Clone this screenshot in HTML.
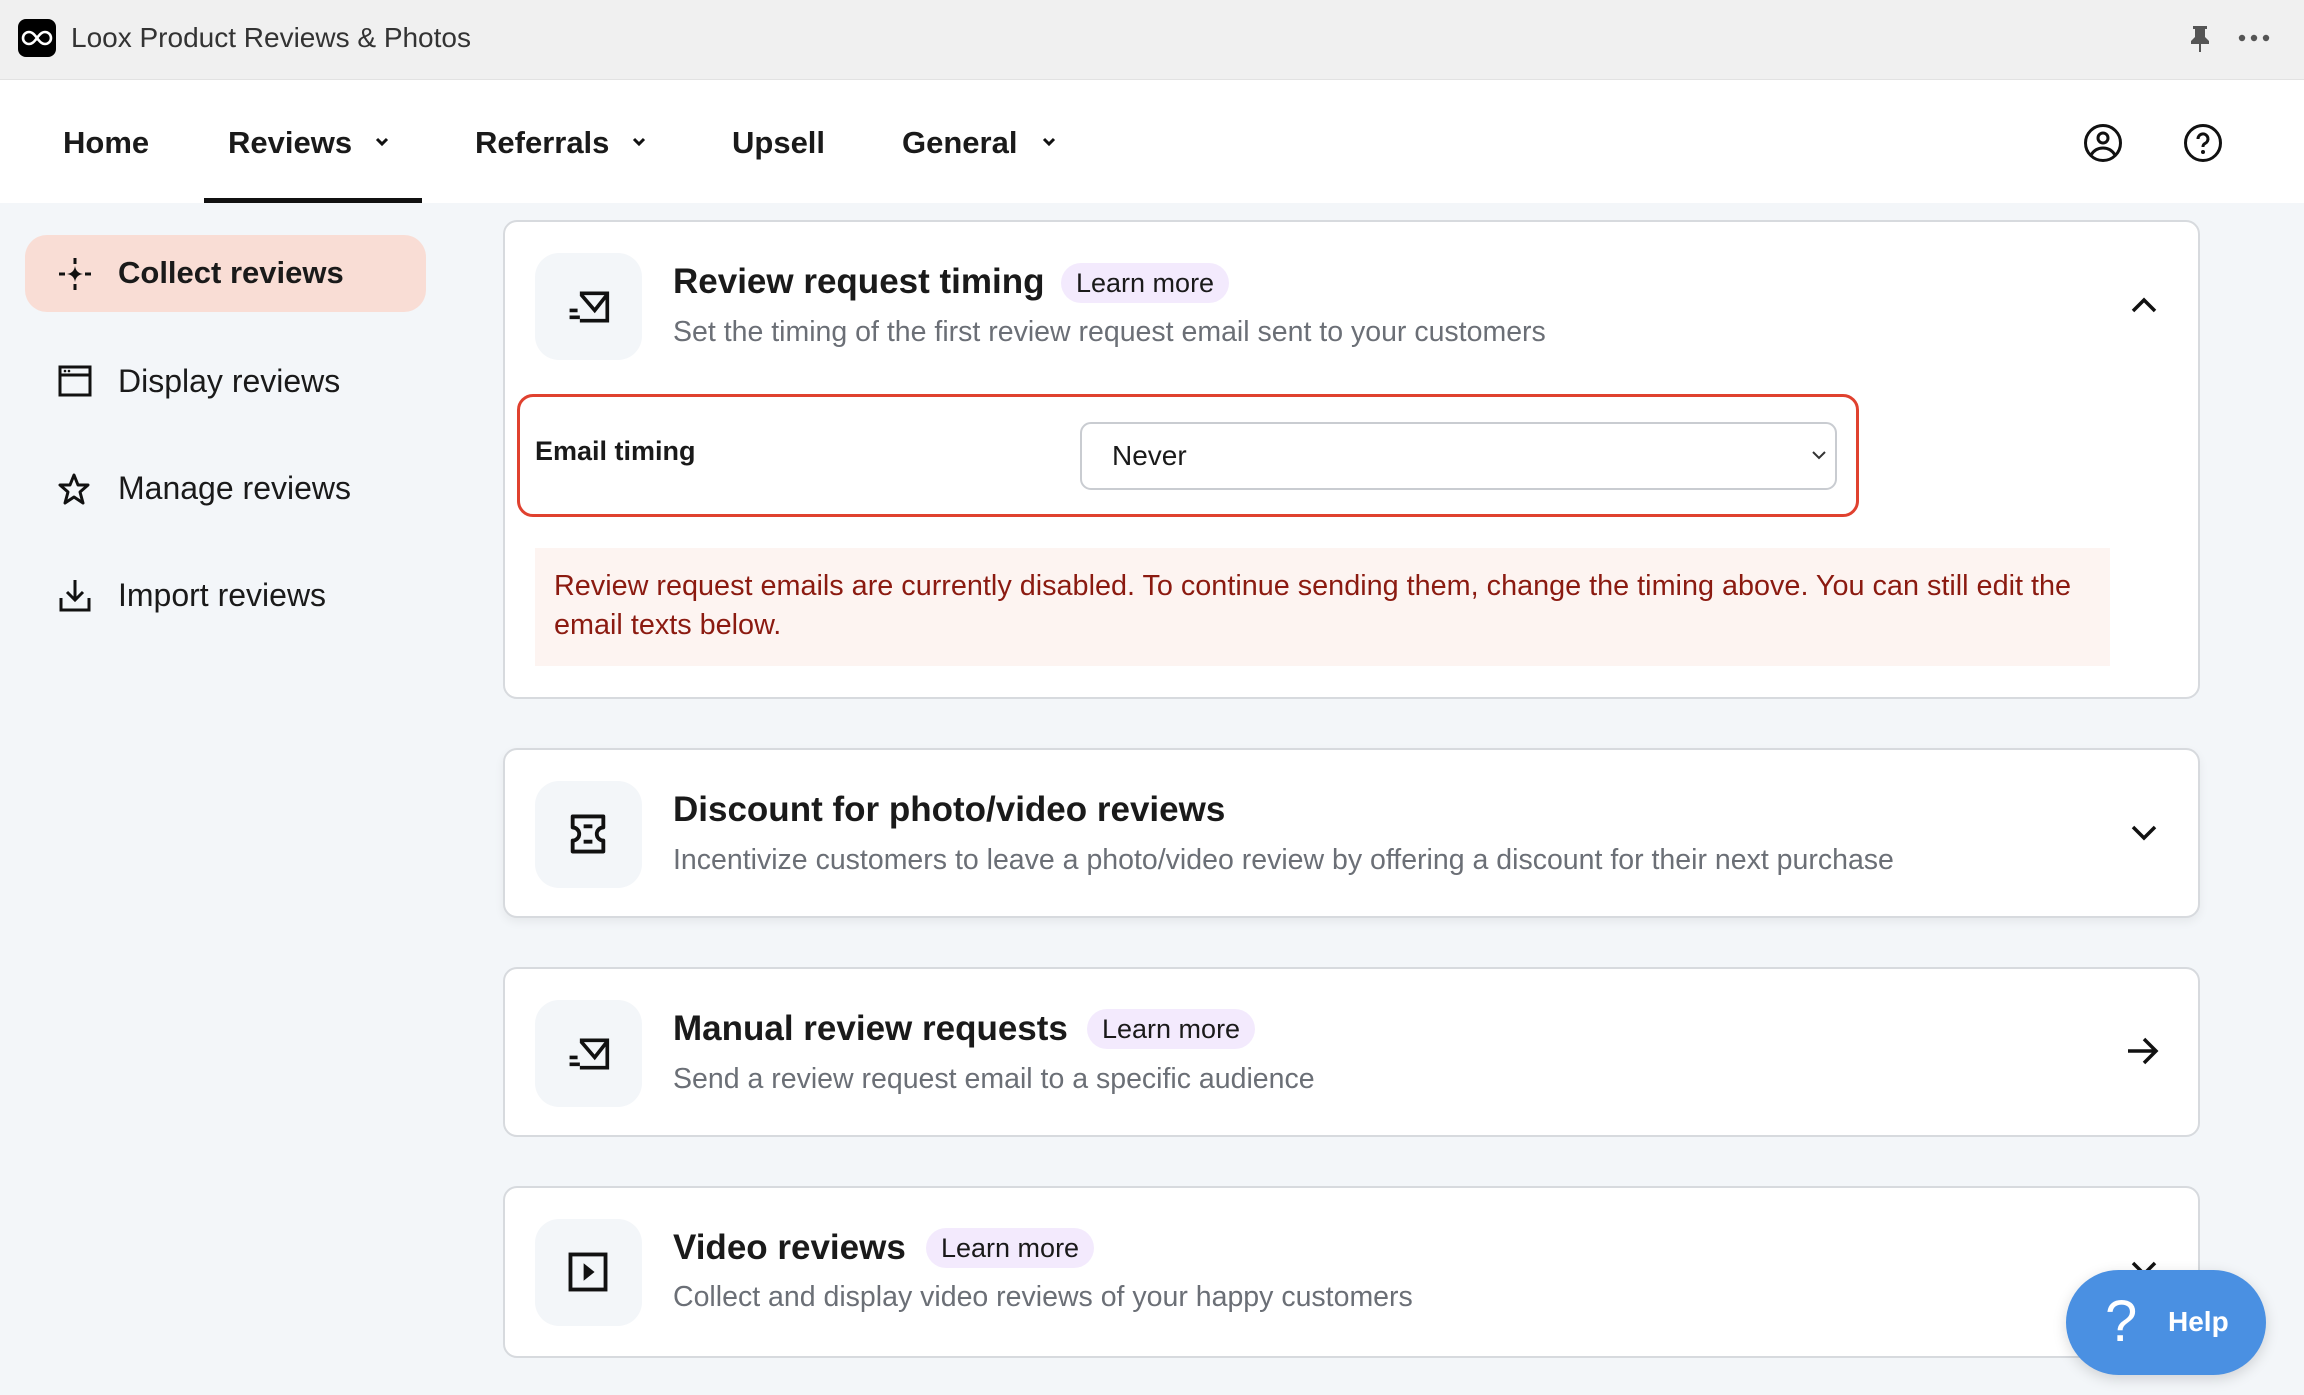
<!DOCTYPE html>
<html><head><meta charset="utf-8"><style>
*{box-sizing:border-box;margin:0;padding:0}
body{width:2304px;height:1395px;overflow:hidden;background:#f3f6f9;font-family:"Liberation Sans",sans-serif;color:#1a1a1a;position:relative}
.a{position:absolute;white-space:nowrap}
.top{position:absolute;left:0;top:0;width:2304px;height:80px;background:#f0f0f0;border-bottom:1px solid #e2e2e2}
.nav{position:absolute;left:0;top:80px;width:2304px;height:123px;background:#fff}
.navt{font-size:31px;font-weight:bold;line-height:40px;top:123px}
.card{position:absolute;left:503px;width:1697px;background:#fff;border:2px solid #d7dade;border-radius:14px}
.ib{position:absolute;left:30px;width:107px;height:107px;background:#f3f6f9;border-radius:24px}
.ib svg{position:absolute;left:30px;top:30px}
.tt{font-size:35px;font-weight:bold;line-height:44px}
.st{font-size:28.5px;color:#6b6f76;line-height:36px}
.lm{background:#f3eafd;border-radius:20px;font-size:27px;line-height:40px;padding:0 15px;color:#1a1a1a}
.side{font-size:32px;line-height:40px;left:118px}
</style></head><body>
<div class="top"></div>
<div class="a" style="left:18px;top:19px;width:38px;height:38px;background:#000;border-radius:8px"><svg width="38" height="38" viewBox="0 0 38 38"><path d="M19 19c-3-4-5-6-8-6a6 6 0 0 0 0 12c3 0 5-2 8-6s5-6 8-6a6 6 0 0 1 0 12c-3 0-5-2-8-6z" fill="none" stroke="#fff" stroke-width="2.6"/></svg></div>
<div class="a" style="left:71px;top:21px;font-size:28px;line-height:34px;color:#333">Loox Product Reviews &amp; Photos</div>
<svg class="a" style="left:2188px;top:25px" width="24" height="28" viewBox="0 0 24 28"><path d="M5 1h14v3h-2v8l4 4v3H13v8h-2v-8H3v-3l4-4V4H5z" fill="#555"/></svg>
<svg class="a" style="left:2238px;top:34px" width="32" height="8"><circle cx="4" cy="4" r="3.2" fill="#555"/><circle cx="16" cy="4" r="3.2" fill="#555"/><circle cx="28" cy="4" r="3.2" fill="#555"/></svg>
<div class="nav"></div>
<div class="a navt" style="left:63px">Home</div>
<div class="a navt" style="left:228px">Reviews</div>
<div class="a navt" style="left:475px">Referrals</div>
<div class="a navt" style="left:732px">Upsell</div>
<div class="a navt" style="left:902px">General</div>
<svg class="a" style="left:374px;top:136px" width="16" height="12"><path d="M3 3l5 5 5-5" fill="none" stroke="#111" stroke-width="3"/></svg>
<svg class="a" style="left:631px;top:136px" width="16" height="12"><path d="M3 3l5 5 5-5" fill="none" stroke="#111" stroke-width="3"/></svg>
<svg class="a" style="left:1041px;top:136px" width="16" height="12"><path d="M3 3l5 5 5-5" fill="none" stroke="#111" stroke-width="3"/></svg>
<div class="a" style="left:204px;top:198px;width:218px;height:5px;background:#111"></div>
<svg class="a" style="left:2083px;top:123px" width="40" height="40" viewBox="0 0 40 40"><circle cx="20" cy="20" r="17.5" fill="none" stroke="#111" stroke-width="3"/><circle cx="20" cy="15" r="5" fill="none" stroke="#111" stroke-width="3"/><path d="M8 32c3-5 7-7 12-7s9 2 12 7" fill="none" stroke="#111" stroke-width="3"/></svg>
<svg class="a" style="left:2183px;top:123px" width="40" height="40" viewBox="0 0 40 40"><circle cx="20" cy="20" r="17.5" fill="none" stroke="#111" stroke-width="3"/><path d="M15 16a5 5 0 1 1 7 4.5c-1.5.8-2 1.5-2 3.5" fill="none" stroke="#111" stroke-width="3"/><circle cx="20" cy="29" r="2" fill="#111"/></svg>

<div class="a" style="left:25px;top:235px;width:401px;height:77px;background:#f9ddd5;border-radius:22px"></div>
<svg class="a" style="left:58px;top:257px" width="34" height="34" viewBox="0 0 34 34"><path d="M17 9Q18 16 25 17Q18 18 17 25Q16 18 9 17Q16 16 17 9z" fill="#111"/><path d="M17 1v6M17 27v6M1 17h6M27 17h6" stroke="#111" stroke-width="3"/></svg>
<div class="a side" style="top:253px;font-weight:bold;font-size:31px">Collect reviews</div>
<svg class="a" style="left:58px;top:365px" width="34" height="32" viewBox="0 0 34 32"><rect x="2" y="2" width="30" height="28" fill="none" stroke="#111" stroke-width="3"/><path d="M2 10h30" stroke="#111" stroke-width="3"/><circle cx="7" cy="6" r="1.3" fill="#111"/><circle cx="11" cy="6" r="1.3" fill="#111"/></svg>
<div class="a side" style="top:361px">Display reviews</div>
<svg class="a" style="left:57px;top:472px" width="34" height="34" viewBox="0 0 34 34"><path d="M17 3l4 10h10l-8 7 3 11-9-6-9 6 3-11-8-7h10z" fill="none" stroke="#111" stroke-width="3" stroke-linejoin="round"/></svg>
<div class="a side" style="top:468px">Manage reviews</div>
<svg class="a" style="left:58px;top:578px" width="34" height="34" viewBox="0 0 34 34"><path d="M17 2v20M9 14l8 8 8-8" fill="none" stroke="#111" stroke-width="3"/><path d="M3 20v12h28V20" fill="none" stroke="#111" stroke-width="3"/></svg>
<div class="a side" style="top:575px">Import reviews</div>

<!-- card 1 -->
<div class="card" style="top:220px;height:479px">
 <div class="ib" style="top:31px"><svg width="48" height="48" viewBox="0 0 42 42"><path d="M13 9h24v24H13" fill="none" stroke="#111" stroke-width="3.2"/><path d="M14 10l12 14 11-14" fill="none" stroke="#111" stroke-width="3.2"/><path d="M4 24h7M4 30h9" stroke="#111" stroke-width="3.2"/></svg></div>
</div>
<div class="a tt" style="left:673px;top:260px">Review request timing</div>
<div class="a lm" style="left:1061px;top:263px">Learn more</div>
<div class="a st" style="left:673px;top:314px">Set the timing of the first review request email sent to your customers</div>
<svg class="a" style="left:2130px;top:296px" width="28" height="18"><path d="M3 15L14 4l11 11" fill="none" stroke="#111" stroke-width="3.5"/></svg>
<div class="a" style="left:517px;top:394px;width:1342px;height:123px;border:3px solid #e0412f;border-radius:16px"></div>
<div class="a" style="left:535px;top:433px;font-size:27px;font-weight:bold;line-height:36px">Email timing</div>
<div class="a" style="left:1080px;top:422px;width:757px;height:68px;border:2px solid #c9ccd1;border-radius:11px;background:#fff"></div>
<div class="a" style="left:1112px;top:438px;font-size:28px;line-height:36px">Never</div>
<svg class="a" style="left:1811px;top:449px" width="16" height="12"><path d="M2 3l6 6 6-6" fill="none" stroke="#333" stroke-width="2"/></svg>
<div class="a" style="left:535px;top:548px;width:1575px;height:118px;background:#fdf4f1"></div>
<div class="a" style="left:554px;top:567px;font-size:28.8px;line-height:39px;color:#8b1a10;white-space:nowrap">Review request emails are currently disabled. To continue sending them, change the timing above. You can still edit the<br>email texts below.</div>

<!-- card 2 -->
<div class="card" style="top:748px;height:170px;box-shadow:0 4px 10px rgba(0,0,0,0.06)">
 <div class="ib" style="top:31px"><svg width="46" height="46" viewBox="0 0 42 42"><path d="M7 5h28v10a6 6 0 0 0 0 12v10H7V27a6 6 0 0 0 0-12z" fill="none" stroke="#111" stroke-width="3.5" stroke-linejoin="round"/><path d="M17 14h8M17 28h8" stroke="#111" stroke-width="3.5"/></svg></div>
</div>
<div class="a tt" style="left:673px;top:788px">Discount for photo/video reviews</div>
<div class="a st" style="left:673px;top:842px">Incentivize customers to leave a photo/video review by offering a discount for their next purchase</div>
<svg class="a" style="left:2130px;top:824px" width="28" height="18"><path d="M3 3l11 11L25 3" fill="none" stroke="#111" stroke-width="3.5"/></svg>

<!-- card 3 -->
<div class="card" style="top:967px;height:170px">
 <div class="ib" style="top:31px"><svg width="48" height="48" viewBox="0 0 42 42"><path d="M13 9h24v24H13" fill="none" stroke="#111" stroke-width="3.2"/><path d="M14 10l12 14 11-14" fill="none" stroke="#111" stroke-width="3.2"/><path d="M4 24h7M4 30h9" stroke="#111" stroke-width="3.2"/></svg></div>
</div>
<div class="a tt" style="left:673px;top:1007px">Manual review requests</div>
<div class="a lm" style="left:1087px;top:1009px">Learn more</div>
<div class="a st" style="left:673px;top:1061px">Send a review request email to a specific audience</div>
<svg class="a" style="left:2126px;top:1036px" width="34" height="30"><path d="M2 15h28M18 3l12 12-12 12" fill="none" stroke="#111" stroke-width="3.5"/></svg>

<!-- card 4 -->
<div class="card" style="top:1186px;height:172px">
 <div class="ib" style="top:31px"><svg width="46" height="46" viewBox="0 0 42 42"><rect x="5" y="5" width="32" height="32" fill="none" stroke="#111" stroke-width="3.5"/><path d="M17 13l10 8-10 8z" fill="#111"/></svg></div>
</div>
<div class="a tt" style="left:673px;top:1226px">Video reviews</div>
<div class="a lm" style="left:926px;top:1228px">Learn more</div>
<div class="a st" style="left:673px;top:1279px">Collect and display video reviews of your happy customers</div>
<svg class="a" style="left:2130px;top:1260px" width="28" height="18"><path d="M3 3l11 11L25 3" fill="none" stroke="#111" stroke-width="3.5"/></svg>

<div class="a" style="left:2066px;top:1270px;width:200px;height:105px;background:#4a90e2;border-radius:53px;box-shadow:0 4px 14px rgba(0,0,0,0.15)"></div>
<div class="a" style="left:2105px;top:1288px;font-size:58px;line-height:68px;color:#fff">?</div>
<div class="a" style="left:2168px;top:1304px;font-size:28px;font-weight:bold;line-height:36px;color:#fff">Help</div>
</body></html>
